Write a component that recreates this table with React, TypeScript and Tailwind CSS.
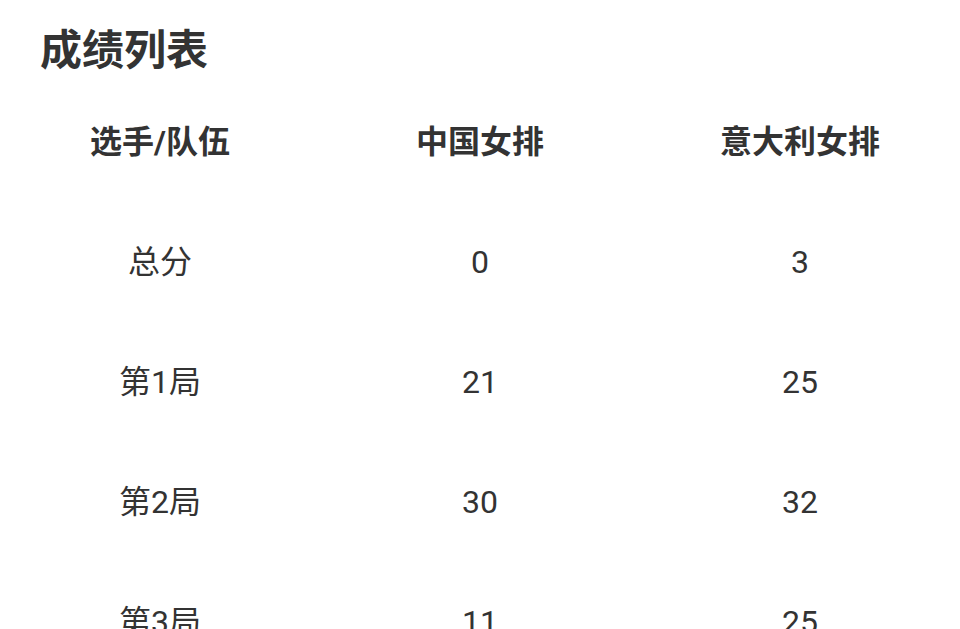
const rows = [
  { name: "总分", a: "0", b: "3" },
  { name: "第1局", a: "21", b: "25" },
  { name: "第2局", a: "30", b: "32" },
  { name: "第3局", a: "11", b: "25" },
];

const App = () => {
  return (
    <div
      className="w-[960px] h-[629px] overflow-hidden bg-white text-[#333]"
      style={{ fontFamily: 'Roboto, "Noto Sans CJK SC", sans-serif' }}
    >
      <div className="h-[82px] pt-[20px] pl-[40px]">
        <h1 className="text-[42px] leading-[62px] font-bold">成绩列表</h1>
      </div>
      <div className="flex flex-col">
        <div className="grid grid-cols-3 h-[120px] items-center text-center text-[32px] font-bold">
          <div>选手/队伍</div>
          <div>中国女排</div>
          <div>意大利女排</div>
        </div>
        {rows.map((row) => (
          <div
            key={row.name}
            className="grid grid-cols-3 h-[120px] items-center text-center text-[32px]"
          >
            <div>{row.name}</div>
            <div>{row.a}</div>
            <div>{row.b}</div>
          </div>
        ))}
      </div>
    </div>
  );
};

export default App;
